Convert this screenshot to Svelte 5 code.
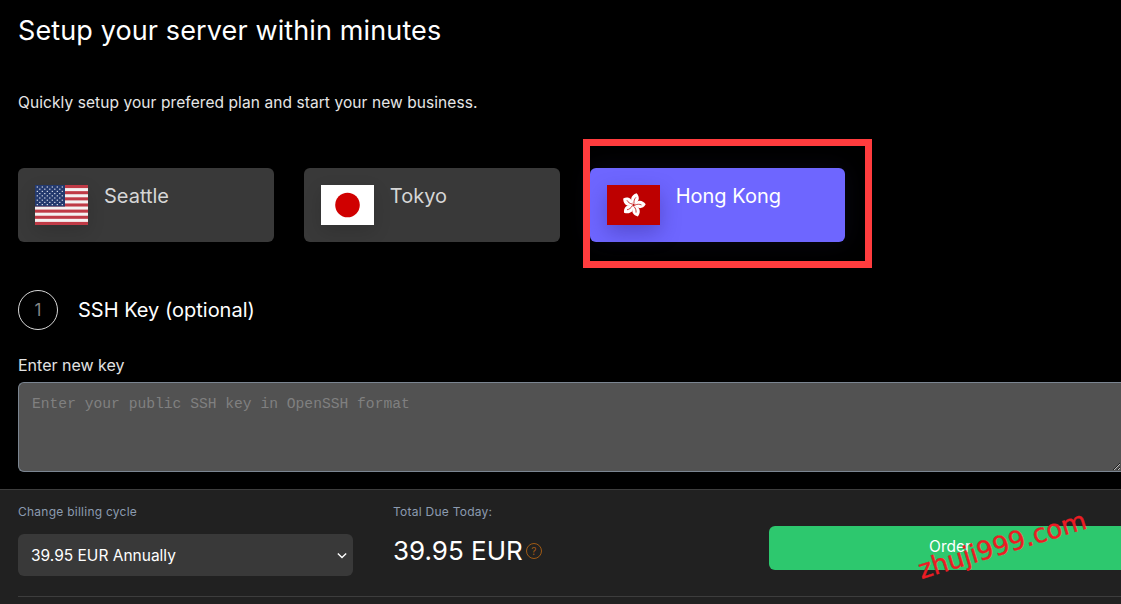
<script>
  const locations = [
    { name: 'Seattle', flag: 'us' },
    { name: 'Tokyo', flag: 'jp' },
    { name: 'Hong Kong', flag: 'hk', active: true }
  ];
  const stripes = [0, 1, 2, 3, 4, 5, 6];
  const petals = [0, 72, 144, 216, 288];
  const starRows = [0, 1, 2, 3, 4, 5, 6, 7, 8];
</script>

<div class="page">
  <main>
    <h1>Setup your server within minutes</h1>
    <p class="lead">Quickly setup your prefered plan and start your new business.</p>

    <div class="locations">
      {#each locations as loc}
        <div class="location" class:active={loc.active}>
          <svg class="flag" viewBox="0 0 53 40" width="53" height="40" preserveAspectRatio="none">
            {#if loc.flag === 'us'}
              <rect width="53" height="40" fill="#f4f2f2" />
              {#each stripes as s}
                <rect y={s * 6.15} width="53" height="3.08" fill="#bf3a46" />
              {/each}
              <rect width="30" height="21.5" fill="#243a6e" />
              {#each starRows as r}
                {#each Array(r % 2 ? 5 : 6) as _, c}
                  <rect x={(r % 2 ? 4.2 : 1.7) + c * 5} y={1.4 + r * 2.2} width="1.2" height="1.2" fill="#dfe3ee" />
                {/each}
              {/each}
            {:else if loc.flag === 'jp'}
              <rect width="53" height="40" fill="#fff" />
              <circle cx="26.5" cy="20" r="12.3" fill="#d00000" />
            {:else}
              <rect width="53" height="40" fill="#bd0000" />
              <g transform="translate(26.5 20)">
                {#each petals as a}
                  <g transform="rotate({a + 12})">
                    <path d="M0.2 -0.8C-5 -3.4 -4.8 -9.4 0.6 -12.2C5.2 -9 4.8 -3.8 0.2 -0.8Z" fill="#fff" />
                    <path d="M0.2 -1.5C-0.6 -4 -0.4 -6 0.8 -8" fill="none" stroke="#bd0000" stroke-width="0.7" />
                  </g>
                {/each}
              </g>
            {/if}
          </svg>
          <span class="loc-name">{loc.name}</span>
        </div>
      {/each}
    </div>

    <div class="step">
      <span class="step-num">1</span>
      <h2>SSH Key (optional)</h2>
    </div>

    <label class="key-label" for="key">Enter new key</label>
    <textarea id="key" placeholder="Enter your public SSH key in OpenSSH format"></textarea>
  </main>

  <footer>
    <div class="billing">
      <div class="small">Change billing cycle</div>
      <div class="select">
        <span>39.95 EUR Annually</span>
        <svg viewBox="0 0 12 8" width="10" height="7"><path d="M1 1.5l5 5 5-5" fill="none" stroke="#fff" stroke-width="1.6" /></svg>
      </div>
    </div>
    <div class="total">
      <div class="small">Total Due Today:</div>
      <div class="price">39.95 EUR<span class="help">?</span></div>
    </div>
    <button class="order">Order</button>
    <div class="rule"></div>
  </footer>

  <div class="highlight"></div>
  <div class="watermark">zhuji999.com</div>
</div>

<style>
  :global(body) {
    margin: 0;
    background: #000;
    overflow: hidden;
  }

  .page {
    position: relative;
    width: 1121px;
    height: 604px;
    overflow: hidden;
    background: #000;
    color: #fff;
    font-family: Inter, "Noto Sans", sans-serif;
  }

  main {
    box-sizing: border-box;
    padding: 13px 0 0 18px;
    height: 476px;
  }

  h1 {
    margin: 0;
    font-size: 27px;
    line-height: 36px;
    font-weight: 400;
    letter-spacing: 0.12px;
  }

  .lead {
    margin: 45px 0 0;
    font-size: 15.5px;
    line-height: 18px;
    color: #e6e6e6;
    letter-spacing: 0.08px;
  }

  .locations {
    display: flex;
    gap: 30.2px;
    margin-top: 56px;
  }

  .location {
    box-sizing: border-box;
    display: flex;
    align-items: flex-start;
    gap: 16px;
    width: 255.67px;
    height: 74px;
    padding: 17px;
    background: #393939;
    border-radius: 6px;
    color: #d6d6d6;
  }

  .location.active {
    background: #6e66ff;
    color: #fff;
    box-shadow: 0 0 24px rgba(110, 102, 255, 0.08);
  }

  .flag {
    flex: none;
    box-shadow: 0 6px 18px rgba(0, 0, 0, 0.14);
  }

  .location.active .flag {
    box-shadow: 0 8px 20px rgba(40, 30, 120, 0.35);
  }

  .loc-name {
    margin-top: -1px;
    font-size: 20px;
    line-height: 24px;
  }

  .step {
    display: flex;
    align-items: center;
    gap: 20px;
    margin-top: 48px;
  }

  .step-num {
    box-sizing: border-box;
    width: 40px;
    height: 40px;
    display: flex;
    align-items: center;
    justify-content: center;
    border: 1px solid #d8d8d8;
    border-radius: 50%;
    font-size: 17px;
    color: #858585;
  }

  h2 {
    margin: 0;
    font-size: 20px;
    line-height: 24px;
    font-weight: 400;
  }

  .key-label {
    display: block;
    margin-top: 26px;
    font-size: 16px;
    line-height: 19px;
    color: #e2e2e2;
  }

  textarea {
    display: block;
    box-sizing: border-box;
    width: 1103px;
    height: 90px;
    margin-top: 7px;
    padding: 12px 13px;
    background: #525252;
    border: 1px solid #7b8591;
    border-right: 0;
    border-radius: 6px 0 0 6px;
    color: #fff;
    font-family: "Liberation Mono", "DejaVu Sans Mono", monospace;
    font-size: 14.65px;
    line-height: 18px;
    outline: none;
    resize: both;
  }

  textarea::placeholder {
    color: #808080;
    opacity: 1;
  }

  footer {
    position: relative;
    box-sizing: border-box;
    display: flex;
    align-items: flex-start;
    height: 115px;
    margin-top: 13px;
    padding: 14px 0 0 18px;
    background: #212121;
    border-top: 1px solid #3d3d3d;
  }

  .small {
    font-size: 12px;
    line-height: 15px;
    color: #8c9bb0;
    letter-spacing: 0.25px;
  }

  .billing {
    flex: none;
    width: 335px;
  }

  .select {
    box-sizing: border-box;
    display: flex;
    align-items: center;
    justify-content: space-between;
    height: 42px;
    margin-top: 15px;
    padding: 0 6px 0 13px;
    background: #393939;
    border-radius: 6px;
    font-size: 15.5px;
    color: #fff;
  }

  .total {
    flex: none;
    width: 376px;
    margin-left: 40px;
  }

  .price {
    display: flex;
    align-items: center;
    margin-top: 12px;
    font-size: 26px;
    line-height: 40px;
  }

  .help {
    box-sizing: border-box;
    display: flex;
    align-items: center;
    justify-content: center;
    width: 16px;
    height: 16px;
    margin: 0 0 0 3px;
    border: 1px solid #a05a14;
    border-radius: 50%;
    font-size: 10px;
    color: #a05a14;
  }

  .order {
    flex: none;
    width: 380px;
    height: 44px;
    margin-top: 22px;
    padding: 0 18px 3px 0;
    border: 0;
    border-radius: 6px;
    background: #2dc86e;
    color: #fff;
    font-family: inherit;
    font-size: 15.5px;
  }

  .rule {
    position: absolute;
    left: 18px;
    right: 0;
    bottom: 7px;
    height: 1px;
    background: #3d3d3d;
  }

  .highlight {
    position: absolute;
    left: 583px;
    top: 139px;
    width: 289px;
    height: 129px;
    box-sizing: border-box;
    border: 7px solid #ff3c3e;
  }

  .watermark {
    position: absolute;
    left: 915px;
    top: 530px;
    font-family: "DejaVu Sans", sans-serif;
    font-size: 26px;
    line-height: 30px;
    color: #ec1c24;
    -webkit-text-stroke: 0.4px #ec1c24;
    transform: rotate(-17deg);
    white-space: nowrap;
  }
</style>
